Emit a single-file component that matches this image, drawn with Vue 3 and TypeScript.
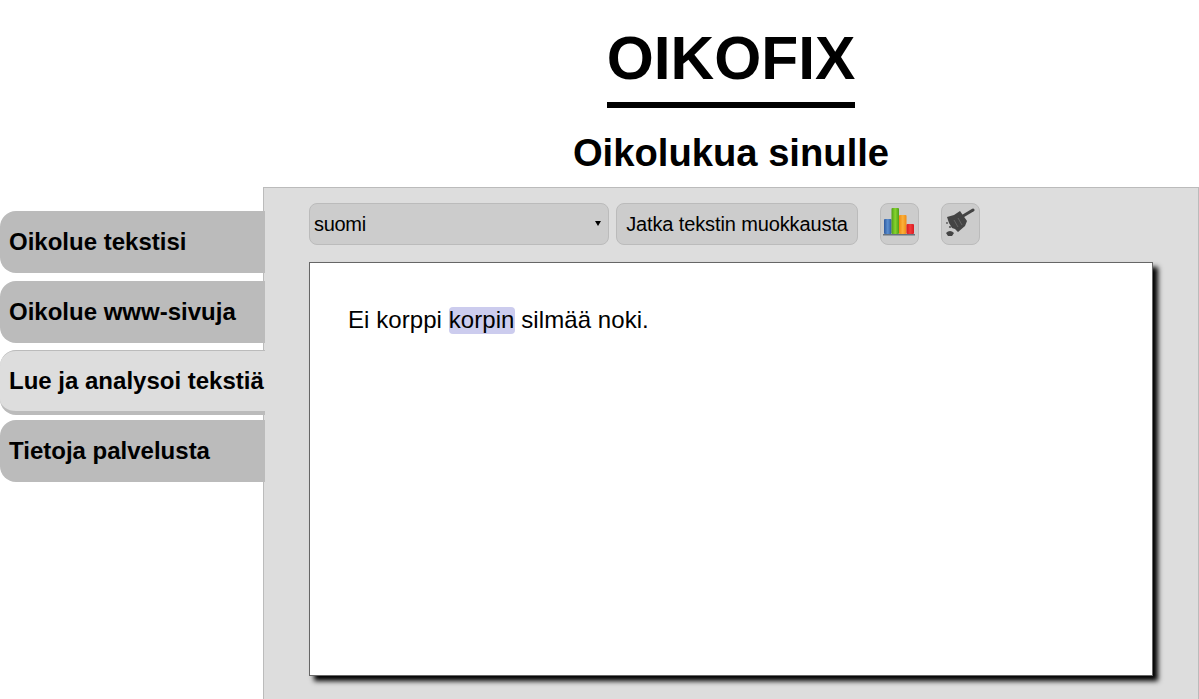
<script setup lang="ts">
const tabs = [
  { label: 'Oikolue tekstisi', active: false },
  { label: 'Oikolue www-sivuja', active: false },
  { label: 'Lue ja analysoi tekstiä', active: true },
  { label: 'Tietoja palvelusta', active: false },
]
</script>

<template>
  <div class="page">
    <header class="head">
      <h1 class="title">OIKOFIX</h1>
      <h2 class="subtitle">Oikolukua sinulle</h2>
    </header>
    <div class="body">
      <nav class="tabs">
        <a v-for="t in tabs" :key="t.label" class="tab" :class="{ active: t.active }">{{ t.label }}</a>
      </nav>
      <main class="panel">
        <div class="toolbar">
          <div class="lang-wrap">
            <select class="lang">
              <option>suomi</option>
            </select>
            <span class="arrow"></span>
          </div>
          <button class="btn continue">Jatka tekstin muokkausta</button>
          <button class="btn icon first" aria-label="Tilastot">
            <svg width="37" height="40" viewBox="0 0 37 40">
              <defs>
                <linearGradient id="gb" x1="0" x2="1" y1="0" y2="0"><stop offset="0" stop-color="#2f5a9e" /><stop offset="0.5" stop-color="#5b8fd0" /><stop offset="1" stop-color="#2f5a9e" /></linearGradient>
                <linearGradient id="gg" x1="0" x2="1" y1="0" y2="0"><stop offset="0" stop-color="#4f9e16" /><stop offset="0.5" stop-color="#86d42e" /><stop offset="1" stop-color="#4f9e16" /></linearGradient>
                <linearGradient id="go" x1="0" x2="1" y1="0" y2="0"><stop offset="0" stop-color="#ee8a12" /><stop offset="0.5" stop-color="#fbb03a" /><stop offset="1" stop-color="#ee8a12" /></linearGradient>
                <linearGradient id="gr" x1="0" x2="1" y1="0" y2="0"><stop offset="0" stop-color="#d81a22" /><stop offset="0.5" stop-color="#f33a3a" /><stop offset="1" stop-color="#d81a22" /></linearGradient>
              </defs>
              <rect x="3" y="15" width="7.5" height="15" rx="1" fill="url(#gb)" />
              <rect x="10.5" y="4" width="7.5" height="26" rx="1" fill="url(#gg)" />
              <rect x="18" y="11" width="7.5" height="19" rx="1" fill="url(#go)" />
              <rect x="25.5" y="20" width="7.5" height="10" rx="1" fill="url(#gr)" />
              <rect x="2" y="30" width="32" height="1.5" fill="#68727c" />
            </svg>
          </button>
          <button class="btn icon" aria-label="Tyhjennä">
            <svg width="37" height="40" viewBox="0 0 37 40">
              <path d="M21 12 L31 6" stroke="#444" stroke-width="3" stroke-linecap="round" fill="none" />
              <path d="M18 7 L25 17 L23 22 L16 28 L13 25 L10 24 L7 19 L5 13 L12 11 Z" fill="#444" />
              <path d="M12 16 L16 23 M16 14 L20 21" stroke="#6e6e6e" stroke-width="0.8" fill="none" />
              <circle cx="5" cy="19" r="0.9" fill="#555" />
              <circle cx="8" cy="23" r="1.1" fill="#555" />
              <path d="M4 29 Q8 25 12 29 L10 32 L6 32 Z" fill="#444" />
            </svg>
          </button>
        </div>
        <div class="editor">
          <p class="text">Ei korppi <span class="hl">korpin</span> silmää noki.</p>
        </div>
      </main>
    </div>
  </div>
</template>

<style>
html, body { margin: 0; background: #fff; overflow: hidden; }
</style>

<style scoped>
.page {
  width: 1199px;
  height: 699px;
  overflow: hidden;
  font-family: "Liberation Sans", Arial, sans-serif;
  color: #000;
}
.head {
  margin-left: 263px;
  height: 187px;
  display: flex;
  flex-direction: column;
  align-items: center;
}
.title {
  margin: 24px 0 0;
  font-size: 60.5px;
  line-height: 69px;
  font-weight: 700;
  height: 78px;
  border-bottom: 6px solid #000;
  box-sizing: content-box;
}
.subtitle {
  margin: 23px 0 0;
  font-size: 38.2px;
  line-height: 44px;
  font-weight: 700;
}
.body {
  display: flex;
  height: 512px;
}
.tabs {
  width: 263px;
  flex: none;
  padding-top: 24px;
  display: flex;
  flex-direction: column;
  position: relative;
  z-index: 1;
}
.tab {
  display: block;
  box-sizing: border-box;
  width: 265px;
  height: 62px;
  margin-bottom: 8px;
  padding-left: 9px;
  line-height: 62px;
  font-size: 24px;
  font-weight: 700;
  background: #bbb;
  border-radius: 16px 0 0 16px;
  white-space: nowrap;
  overflow: hidden;
}
.tab.active {
  height: 65px;
  margin-top: -1px;
  margin-bottom: 5px;
  line-height: 60px;
  background: #ddd;
  border-top: 1px solid #bbb;
  border-bottom: 4px solid #bbb;
}
.panel {
  flex: 1;
  box-sizing: border-box;
  background: #ddd;
  border: 1px solid #bbb;
  border-bottom: 0;
  padding: 15px 45px 0;
  min-width: 0;
}
.toolbar {
  display: flex;
  height: 42px;
}
.lang-wrap {
  position: relative;
  width: 300px;
  height: 42px;
}
.lang {
  appearance: none;
  display: block;
  box-sizing: border-box;
  width: 300px;
  height: 42px;
  font: 20px "Liberation Sans", Arial, sans-serif;
  letter-spacing: -0.3px;
  color: #000;
  background: #ccc;
  border: 1px solid #bbb;
  border-radius: 8px;
  padding: 0 0 0 4px;
}
.arrow {
  position: absolute;
  right: 8px;
  top: 18px;
  width: 0;
  height: 0;
  border-left: 3px solid transparent;
  border-right: 3px solid transparent;
  border-top: 5px solid #000;
  pointer-events: none;
}
.btn {
  height: 42px;
  box-sizing: border-box;
  background: #ccc;
  border: 1px solid #bbb;
  border-radius: 8px;
  color: #000;
  font: 20px "Liberation Sans", Arial, sans-serif;
  padding: 0;
}
.continue {
  width: 242px;
  margin-left: 7px;
  letter-spacing: -0.12px;
}
.icon {
  width: 39px;
  margin-left: 22px;
  display: flex;
  align-items: center;
  justify-content: center;
  overflow: hidden;
}
.icon svg { flex: none; filter: blur(0.6px); }
.editor {
  box-sizing: border-box;
  width: 844px;
  height: 414px;
  margin-top: 17px;
  background: #fff;
  border: 1px solid #666;
  box-shadow: 5px 5px 5px #000;
  padding: 38px;
}
.text {
  position: relative;
  z-index: 0;
  margin: 0;
  font-size: 24px;
  line-height: 38px;
  letter-spacing: 0.07px;
}
.hl {
  position: relative;
}
.hl::before {
  content: "";
  position: absolute;
  z-index: -1;
  left: 0;
  right: 0;
  top: 1px;
  bottom: -1px;
  background: #ccccee;
  border-radius: 4px;
}
</style>
